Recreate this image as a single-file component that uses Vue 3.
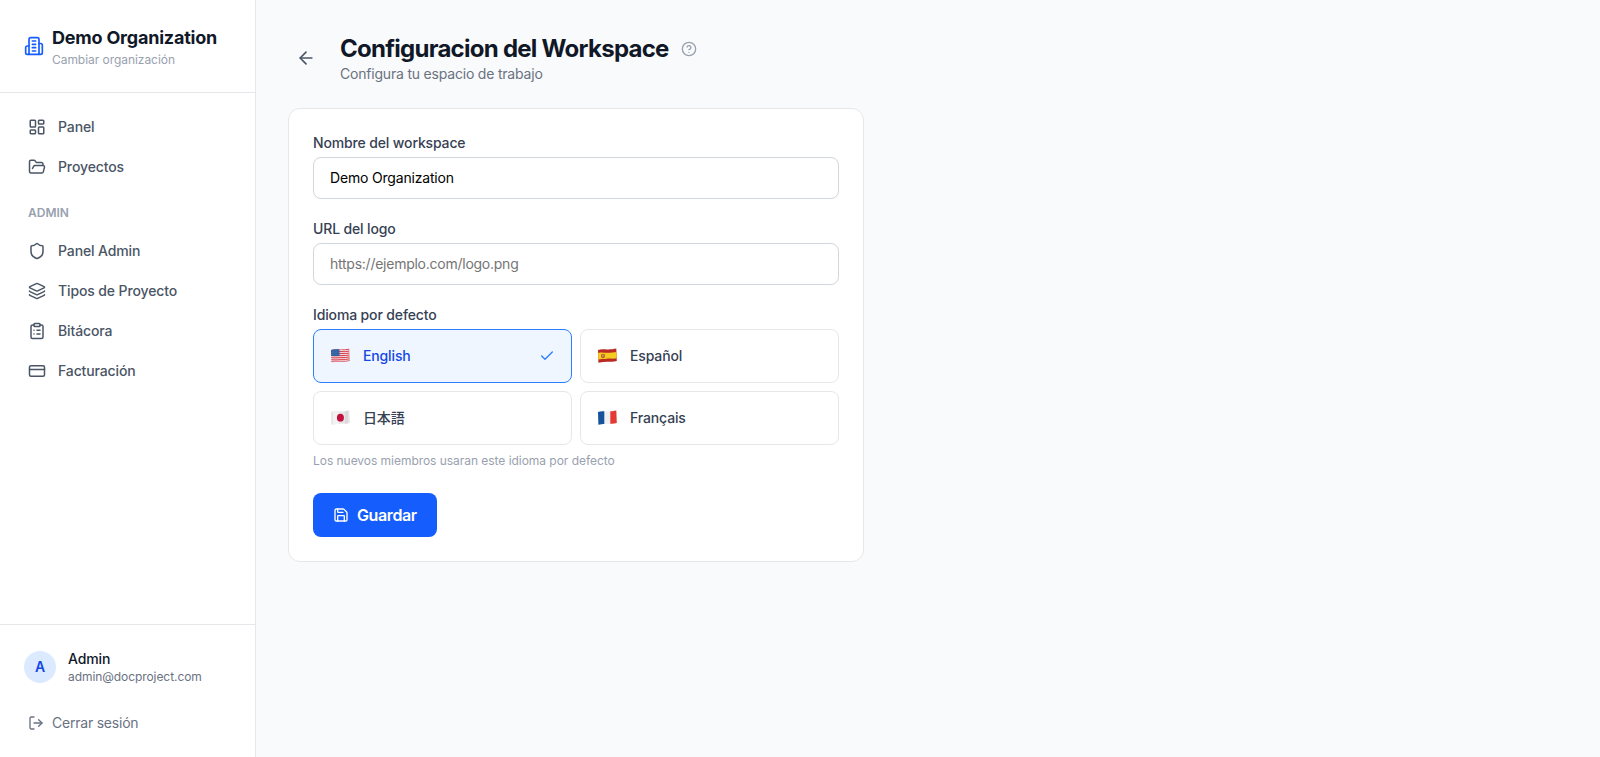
<script setup>
import { ref } from 'vue'

const icons = {
  building: [
    'M6 22V4a2 2 0 0 1 2-2h8a2 2 0 0 1 2 2v18Z',
    'M6 12H4a2 2 0 0 0-2 2v6a2 2 0 0 0 2 2h2',
    'M18 9h2a2 2 0 0 1 2 2v9a2 2 0 0 1-2 2h-2',
    'M10 6h4M10 10h4M10 14h4M10 18h4'
  ],
  dashboard: [
    'M4 3h5a1 1 0 0 1 1 1v7a1 1 0 0 1-1 1H4a1 1 0 0 1-1-1V4a1 1 0 0 1 1-1Z',
    'M15 3h5a1 1 0 0 1 1 1v3a1 1 0 0 1-1 1h-5a1 1 0 0 1-1-1V4a1 1 0 0 1 1-1Z',
    'M15 12h5a1 1 0 0 1 1 1v7a1 1 0 0 1-1 1h-5a1 1 0 0 1-1-1v-7a1 1 0 0 1 1-1Z',
    'M4 16h5a1 1 0 0 1 1 1v3a1 1 0 0 1-1 1H4a1 1 0 0 1-1-1v-3a1 1 0 0 1 1-1Z'
  ],
  folder: ['m6 14 1.5-2.9A2 2 0 0 1 9.24 10H20a2 2 0 0 1 1.94 2.5l-1.54 6a2 2 0 0 1-1.95 1.5H4a2 2 0 0 1-2-2V5a2 2 0 0 1 2-2h3.9a2 2 0 0 1 1.69.9l.81 1.2a2 2 0 0 0 1.67.9H18a2 2 0 0 1 2 2v2'],
  shield: ['M20 13c0 5-3.5 7.5-7.66 8.95a1 1 0 0 1-.67-.01C7.5 20.5 4 18 4 13V6a1 1 0 0 1 1-1c2 0 4.5-1.2 6.24-2.72a1.17 1.17 0 0 1 1.52 0C14.51 3.81 17 5 19 5a1 1 0 0 1 1 1z'],
  layers: [
    'M12.83 2.18a2 2 0 0 0-1.66 0L2.6 6.08a1 1 0 0 0 0 1.83l8.58 3.91a2 2 0 0 0 1.66 0l8.58-3.9a1 1 0 0 0 0-1.83z',
    'M2 12a1 1 0 0 0 .58.91l8.6 3.91a2 2 0 0 0 1.65 0l8.58-3.9A1 1 0 0 0 22 12',
    'M2 17a1 1 0 0 0 .58.91l8.6 3.91a2 2 0 0 0 1.65 0l8.58-3.9A1 1 0 0 0 22 17'
  ],
  clipboard: [
    'M9 2h6a1 1 0 0 1 1 1v2a1 1 0 0 1-1 1H9a1 1 0 0 1-1-1V3a1 1 0 0 1 1-1Z',
    'M16 4h2a2 2 0 0 1 2 2v14a2 2 0 0 1-2 2H6a2 2 0 0 1-2-2V6a2 2 0 0 1 2-2h2',
    'M12 11h4M12 16h4M8 11h.01M8 16h.01'
  ],
  card: ['M4 5h16a2 2 0 0 1 2 2v10a2 2 0 0 1-2 2H4a2 2 0 0 1-2-2V7a2 2 0 0 1 2-2Z', 'M2 10h20'],
  logout: ['m16 17 5-5-5-5', 'M21 12H9', 'M9 21H5a2 2 0 0 1-2-2V5a2 2 0 0 1 2-2h4'],
  back: ['m12 19-7-7 7-7', 'M19 12H5'],
  help: ['M12 2a10 10 0 1 0 0 20a10 10 0 1 0 0-20', 'M9.09 9a3 3 0 0 1 5.83 1c0 2-3 3-3 3', 'M12 17h.01'],
  check: ['M20 6 9 17l-5-5'],
  save: [
    'M15.2 3a2 2 0 0 1 1.4.6l3.8 3.8a2 2 0 0 1 .6 1.4V19a2 2 0 0 1-2 2H5a2 2 0 0 1-2-2V5a2 2 0 0 1 2-2z',
    'M17 21v-7a1 1 0 0 0-1-1H8a1 1 0 0 0-1 1v7',
    'M7 3v4a1 1 0 0 0 1 1h7'
  ]
}

const mainNav = [
  { label: 'Panel', icon: 'dashboard' },
  { label: 'Proyectos', icon: 'folder' }
]

const adminNav = [
  { label: 'Panel Admin', icon: 'shield' },
  { label: 'Tipos de Proyecto', icon: 'layers' },
  { label: 'Bitácora', icon: 'clipboard' },
  { label: 'Facturación', icon: 'card' }
]

const languages = [
  { code: 'en', label: 'English' },
  { code: 'es', label: 'Español' },
  { code: 'ja', label: '日本語' },
  { code: 'fr', label: 'Français' }
]

const name = ref('Demo Organization')
const logoUrl = ref('')
const language = ref('en')
</script>

<template>
  <div class="layout">
    <aside class="sidebar">
      <div class="org">
        <svg class="icon org-icon" viewBox="0 0 24 24"><path v-for="d in icons.building" :key="d" :d="d" /></svg>
        <div>
          <div class="org-name">{{ name }}</div>
          <div class="org-switch">Cambiar organización</div>
        </div>
      </div>

      <nav class="nav">
        <a v-for="item in mainNav" :key="item.label" class="nav-item">
          <svg class="icon nav-icon" viewBox="0 0 24 24"><path v-for="d in icons[item.icon]" :key="d" :d="d" /></svg>
          {{ item.label }}
        </a>
        <div class="nav-title">ADMIN</div>
        <a v-for="item in adminNav" :key="item.label" class="nav-item">
          <svg class="icon nav-icon" viewBox="0 0 24 24"><path v-for="d in icons[item.icon]" :key="d" :d="d" /></svg>
          {{ item.label }}
        </a>
      </nav>

      <div class="account">
        <div class="user">
          <div class="avatar">A</div>
          <div>
            <div class="user-name">Admin</div>
            <div class="user-email">admin@docproject.com</div>
          </div>
        </div>
        <button class="logout">
          <svg class="icon" viewBox="0 0 24 24"><path v-for="d in icons.logout" :key="d" :d="d" /></svg>
          Cerrar sesión
        </button>
      </div>
    </aside>

    <main class="main">
      <header class="header">
        <button class="back">
          <svg class="icon" viewBox="0 0 24 24"><path v-for="d in icons.back" :key="d" :d="d" /></svg>
        </button>
        <div>
          <div class="title-row">
            <h1>Configuracion del Workspace</h1>
            <svg class="icon help" viewBox="0 0 24 24"><path v-for="d in icons.help" :key="d" :d="d" /></svg>
          </div>
          <p class="subtitle">Configura tu espacio de trabajo</p>
        </div>
      </header>

      <form class="card" @submit.prevent>
        <div class="field">
          <label for="name">Nombre del workspace</label>
          <input id="name" v-model="name" type="text">
        </div>
        <div class="field">
          <label for="logo">URL del logo</label>
          <input id="logo" v-model="logoUrl" type="text" placeholder="https://ejemplo.com/logo.png">
        </div>
        <div class="field">
          <label>Idioma por defecto</label>
          <div class="languages">
            <button
              v-for="lang in languages"
              :key="lang.code"
              type="button"
              class="language"
              :class="{ active: language === lang.code }"
              @click="language = lang.code"
            >
              <svg class="flag" viewBox="0 0 21 28">
                <defs>
                  <clipPath :id="'wave-' + lang.code">
                    <path d="M1 8C4 6.8 7 7.3 10 7.5S16.5 7.2 19.3 6.6L19.8 19.1C17 20.2 13.500 19.700 10.500 19.800S4.500 20.200 1.400 20.800Z" />
                  </clipPath>
                </defs>
                <g :clip-path="`url(#wave-${lang.code})`">
                  <template v-if="lang.code === 'en'">
                    <path fill="#f0dde1" d="M0 5h21v18H0z" />
                    <path
                      v-for="n in 7"
                      :key="n"
                      class="stripe"
                      :d="`M0 ${5.8 + n * 1.95}Q5 ${5 + n * 1.95} 10 ${5.6 + n * 1.95}T21 ${5 + n * 1.95}`"
                    />
                    <path fill="#2f5fa0" d="M0 5h9.500v9H0z" />
                    <path stroke="#7f9fc9" stroke-width=".5" stroke-dasharray=".6 .9" d="M2 9h7M2 10.700h7M2 12.400h7" />
                  </template>
                  <template v-else-if="lang.code === 'es'">
                    <path fill="#b92a25" d="M0 5h21v18H0z" />
                    <path fill="#f5cb20" d="M0 11.200C4 9.800 7 10.600 10 10.800S17 10.300 21 9.900V16.200C17 17 13.500 16.400 10 16.700S4 17 0 17.600Z" />
                    <path fill="#a9562b" d="M4.200 12.200h3.600v3.100l-1.800 1-1.800-1z" />
                    <path fill="#d9b28a" d="M5.300 13.100h1.300v1.700H5.300z" />
                  </template>
                  <template v-else-if="lang.code === 'ja'">
                    <path fill="#e6e6e6" d="M0 5h21v18H0z" />
                    <path fill="#f3f3f3" d="M3 5h6v18H3z" />
                    <path fill="#dadada" d="M15 5h3v18h-3z" />
                    <ellipse cx="10.400" cy="13.700" rx="3.500" ry="3.900" fill="#c2113d" />
                  </template>
                  <template v-else>
                    <path fill="#f0f0f0" d="M0 5h21v18H0z" />
                    <path fill="#14539c" d="M0 5h7.300v18H0z" />
                    <path fill="#e33b34" d="M13.300 5H21v18h-7.700z" />
                  </template>
                </g>
              </svg>
              <span>{{ lang.label }}</span>
              <svg v-if="language === lang.code" class="icon check" viewBox="0 0 24 24"><path v-for="d in icons.check" :key="d" :d="d" /></svg>
            </button>
          </div>
          <p class="hint">Los nuevos miembros usaran este idioma por defecto</p>
        </div>
        <button class="save">
          <svg class="icon" viewBox="0 0 24 24"><path v-for="d in icons.save" :key="d" :d="d" /></svg>
          Guardar
        </button>
      </form>
    </main>
  </div>
</template>

<style>
body {
  margin: 0;
}
</style>

<style scoped>
.layout {
  display: flex;
  height: 100vh;
  background: #f9fafb;
  color: #101828;
  font-family: Inter, "Noto Sans CJK JP", sans-serif;
  font-size: 14px;
  line-height: 20px;
}

.layout * {
  box-sizing: border-box;
}

button,
input {
  font: inherit;
}

button {
  border: 0;
  background: none;
  cursor: pointer;
}

.icon {
  flex: none;
  width: 16px;
  height: 16px;
  fill: none;
  stroke: currentColor;
  stroke-width: 2;
  stroke-linecap: round;
  stroke-linejoin: round;
}

/* Sidebar */
.sidebar {
  display: flex;
  flex: none;
  flex-direction: column;
  width: 256px;
  background: #fff;
  border-right: 1px solid #e5e7eb;
}

.org {
  display: flex;
  align-items: center;
  gap: 8px;
  padding: 24px;
  border-bottom: 1px solid #e5e7eb;
}

.org-icon {
  width: 20px;
  height: 20px;
  color: #155dfc;
}

.org-name {
  font-size: 18px;
  font-weight: 700;
  letter-spacing: -0.21px;
  line-height: 28px;
  white-space: nowrap;
}

.org-switch {
  color: #99a1af;
  font-size: 12px;
  letter-spacing: -0.05px;
  line-height: 16px;
}

.nav {
  display: flex;
  flex: 1;
  flex-direction: column;
  gap: 4px;
  padding: 16px;
}

.nav-item {
  display: flex;
  align-items: center;
  gap: 12px;
  padding: 8px 12px;
  color: #4a5565;
  font-weight: 500;
  letter-spacing: -0.12px;
}

.nav-icon {
  width: 18px;
  height: 18px;
}

.nav-title {
  padding: 16px 12px 8px;
  color: #99a1af;
  font-size: 12px;
  font-weight: 600;
  line-height: 16px;
}

.account {
  padding: 16px;
  border-top: 1px solid #e5e7eb;
}

.user {
  display: flex;
  align-items: center;
  gap: 12px;
  margin-bottom: 12px;
  padding: 8px;
}

.avatar {
  display: flex;
  align-items: center;
  justify-content: center;
  width: 32px;
  height: 32px;
  border-radius: 50%;
  background: #dbeafe;
  color: #1447e6;
  font-weight: 600;
}

.user-name {
  font-weight: 500;
  letter-spacing: -0.1px;
}

.user-email {
  color: #6a7282;
  font-size: 12px;
  letter-spacing: -0.07px;
  line-height: 16px;
}

.logout {
  display: flex;
  align-items: center;
  gap: 8px;
  padding: 8px 12px;
  color: #6a7282;
  letter-spacing: -0.22px;
}

/* Content */
.main {
  flex: 1;
  padding: 32px;
}

.header {
  display: flex;
  align-items: center;
  gap: 16px;
  margin-bottom: 24px;
}

.back {
  display: flex;
  padding: 8px;
  color: #4a5565;
}

.back .icon {
  width: 20px;
  height: 20px;
}

.title-row {
  display: flex;
  align-items: center;
  gap: 12px;
  height: 32px;
  padding-top: 2px;
}

h1 {
  margin: 0;
  font-size: 24px;
  font-weight: 700;
  letter-spacing: -0.73px;
  line-height: 30px;
}

.help {
  color: #99a1af;
}

.subtitle {
  margin: 0;
  color: #6a7282;
  letter-spacing: -0.2px;
}

.card {
  display: flex;
  flex-direction: column;
  gap: 20px;
  width: 576px;
  padding: 24px;
  background: #fff;
  border: 1px solid #e5e7eb;
  border-radius: 12px;
}

.field {
  display: flex;
  flex-direction: column;
}

label {
  margin-bottom: 4px;
  color: #364153;
  font-weight: 500;
  letter-spacing: -0.14px;
}

input {
  height: 42px;
  padding: 9px 16px 11px;
  border: 1px solid #d1d5dc;
  border-radius: 8px;
  background: #fff;
  color: #000;
  letter-spacing: -0.18px;
  outline: none;
}

input::placeholder {
  color: #757575;
  letter-spacing: -0.25px;
}

.languages {
  display: grid;
  grid-template-columns: 1fr 1fr;
  gap: 8px;
}

.language {
  display: flex;
  align-items: center;
  gap: 12px;
  height: 54px;
  padding: 12px 16px;
  border: 1px solid #e5e7eb;
  border-radius: 8px;
  color: #364153;
  font-weight: 500;
  letter-spacing: -0.14px;
}

.language.active {
  border-color: #2b7fff;
  background: #eff6ff;
  color: #1447e6;
}

.flag {
  flex: none;
  width: 21px;
  height: 28px;
}

.stripe {
  fill: none;
  stroke: #d9404d;
  stroke-width: 1;
}

.check {
  margin-left: auto;
  color: #2b7fff;
}

.hint {
  margin: 8px 0 4px;
  color: #99a1af;
  font-size: 12px;
  letter-spacing: -0.04px;
  line-height: 16px;
}

.save {
  display: flex;
  align-items: center;
  align-self: flex-start;
  gap: 8px;
  width: 124px;
  height: 44px;
  padding: 10px 20px;
  border-radius: 8px;
  background: #155dfc;
  color: #fff;
  font-size: 16px;
  font-weight: 600;
  letter-spacing: -0.38px;
  line-height: 24px;
}
</style>
